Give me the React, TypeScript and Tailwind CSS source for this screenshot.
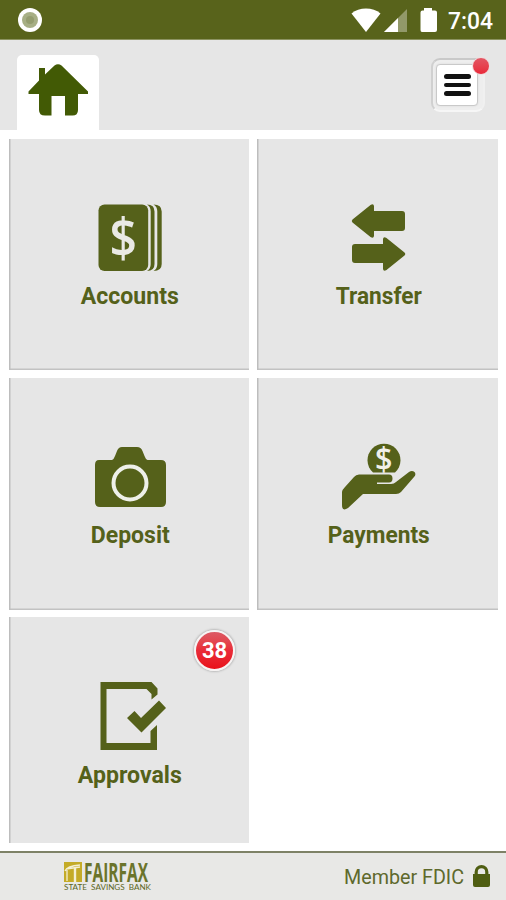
import type { ReactNode } from 'react';

type TileProps = {
  label: string;
  viewBox: string;
  labelWidth: number;
  badge?: string;
  edge?: string;
  children: ReactNode;
};

const fullEdge = 'pt-[60px] shadow-[inset_1.5px_0_0_#bdbdbd,inset_0_-1.5px_0_#c2c2c2]';
const leftEdge = 'pt-[61px] shadow-[inset_1.5px_0_0_#bdbdbd]';

function Tile({ label, viewBox, labelWidth, badge, edge = fullEdge, children }: TileProps) {
  return (
    <button className={`relative flex flex-col items-center bg-[#e6e6e6] ${edge}`}>
      <svg className="h-20 w-[120px] shrink-0" viewBox={viewBox} fill="#55611a">
        {children}
      </svg>
      <svg className="h-8 shrink-0" width={labelWidth} overflow="visible" fill="#55611a">
        <text x="0.8" y="24.6" fontSize="23.2" fontWeight="700" textLength={labelWidth} lengthAdjust="spacingAndGlyphs">
          {label}
        </text>
      </svg>
      {badge && (
        <span className="absolute top-[13px] right-[14px] flex size-[41px] items-center justify-center rounded-full border-[2.5px] border-[#f7f4f4] bg-linear-to-b from-[#dc5964] via-[#e92b38] to-[#e91019] text-[22px] font-bold text-white shadow-[0_0_2px_1px_#b9b9b9]">
          {badge}
        </span>
      )}
    </button>
  );
}

function StatusBar() {
  return (
    <div className="flex h-10 items-center border-b border-[#8c9361] bg-[#58631b] pl-[18px]">
      <span className="flex size-6 items-center justify-center rounded-full bg-white">
        <span className="flex size-4 items-center justify-center rounded-full bg-[#a7af85]">
          <span className="size-2 rounded-full bg-[#949d6f]" />
        </span>
      </span>
      <svg className="ml-auto h-[39px] w-[156px]" viewBox="350 0 156 39" fill="#fff">
        <path d="M351.5 13.5C359 6.8 373 6.8 380.5 13.5L366 32Z" />
        <path d="M384 32 407 9V32Z" opacity=".35" />
        <path d="M384 32 398 18V32Z" />
        <path d="M424 8h8v2.500h3q2 0 2 2V30q0 2-2 2h-13q-1.500 0-1.500-2V12.500q0-2 2-2h1.500Z" />
        <text x="448" y="29" fontSize="23" fontWeight="500" textLength="45" lengthAdjust="spacingAndGlyphs">7:04</text>
      </svg>
    </div>
  );
}

function Header() {
  return (
    <header className="flex h-[90px] items-end justify-between bg-[#e6e6e6] pr-[21px] pl-[17px]">
      <div className="h-[75px] w-[82px] rounded-t-[5px] bg-white">
        <svg className="h-[75px] w-[82px]" viewBox="17 55 82 75" fill="#425a05">
          <path d="M39 68h6v6.500L54.500 65.500q3.500-2.500 7 0L88 91.500v2.500H78v16q0 5.500-5.500 5.500H65V96H51.500v19.500H45q-6 0-6-5.500V94H28.500v-2.500L39 80.500Z" />
        </svg>
      </div>
      <button className="relative mb-[18px] flex size-[54px] items-center justify-center rounded-[9px] border-2 border-t-[#c9c9c9] border-r-[#f0f0f0] border-b-[#f6f6f6] border-l-[#d0d0d0] bg-[#eeeeee] pr-[2px]">
        <span className="flex size-[42px] flex-col items-center justify-center gap-[4px] rounded-[4px] border border-[#c9c9c9] bg-white shadow-[0_0_2px_#d6d6d6]">
          <span className="h-[4.5px] w-[27px] rounded-full bg-[#111]" />
          <span className="h-[4.5px] w-[27px] rounded-full bg-[#111]" />
          <span className="h-[4.5px] w-[27px] rounded-full bg-[#111]" />
        </span>
        <span className="absolute -top-[3px] -right-[7px] size-[18px] rounded-full border border-[#f2dedf] bg-linear-to-b from-[#e35563] to-[#e92739]" />
      </button>
    </header>
  );
}

function Footer() {
  return (
    <footer className="mt-2 flex h-[49px] items-start justify-between border-t-2 border-[#7e8267] bg-[#e8e8e6]">
      <svg className="ml-[60px] h-[47px] w-[100px]" viewBox="60 853 100 47">
        <path fill="#c4ab27" d="M64 862h18v20H64Z" />
        <path fill="none" stroke="#f4efd2" strokeWidth="1.300" d="M65 871q2-5 15-6M66 869l14-2M67 870v11" />
        <path fill="none" stroke="#f4efd2" strokeWidth="2.400" d="M75 868v14" />
        <text x="84" y="881.5" fontSize="26" fontWeight="700" fontFamily="Open Sans, sans-serif" fill="#6b742b" textLength="64" lengthAdjust="spacingAndGlyphs">FAIRFAX</text>
        <text x="64" y="889.7" fontSize="7.8" fontWeight="400" fontFamily="Lato, sans-serif" fill="#5b6622" textLength="87" lengthAdjust="spacingAndGlyphs" wordSpacing="2">STATE SAVINGS BANK</text>
      </svg>
      <svg className="h-[47px] w-[166px]" viewBox="340 853 166 47" fill="#5e692c">
        <text x="344" y="884" fontSize="20.5" textLength="120" lengthAdjust="spacingAndGlyphs">Member FDIC</text>
        <path fill="#4f5e12" d="M473 874h17v11q0 2-2 2h-13q-2 0-2-2Z" />
        <path fill="none" stroke="#4f5e12" strokeWidth="3.200" d="M476.200 875v-3a5.300 5.300 0 0 1 10.600 0v3" />
      </svg>
    </footer>
  );
}

export default function App() {
  return (
    <div className="flex h-[900px] w-[506px] flex-col overflow-hidden bg-white font-['Roboto',sans-serif]">
      <StatusBar />
      <Header />
      <main className="ml-[9px] grid h-[713px] shrink-0 grid-cols-[240px_241px] grid-rows-[231px_232px_226px] gap-x-2 gap-y-[7.5px] pt-[9px]">
        <Tile label="Accounts" viewBox="69 199 120 80" labelWidth={98}>
          <rect x="98.500" y="204.500" width="49.700" height="66.500" rx="6" />
          <path d="M147 204.500q7.500 0 7.500 7v52.500q0 7-7.500 7 3.700-2 3.700-7v-52.500q0-5-3.700-7Z" />
          <path d="M153.500 204.500q8.200 0 8.200 7v52.500q0 7-8.200 7 3.800-2 3.800-7v-52.500q0-5-3.800-7Z" />
          <text x="109.600" y="257" fontSize="54" fontFamily="Open Sans, sans-serif" fontWeight="600" fill="#e9e9e4" textLength="27.500" lengthAdjust="spacingAndGlyphs">$</text>
        </Tile>
        <Tile label="Transfer" viewBox="318 199 120 80" labelWidth={86}>
          <path d="m352.500 219.500 18-14.500q3-2 3.500 1v5h28q3 0 3 3v14q0 3-3 3h-28v5q-.5 3-3.500 1l-18-14.500q-1.500-1.500 0-3Z" />
          <path d="m404.500 252.500-18-14.500q-3-2-3.500 1v5h-28q-3 0-3 3v13q0 3 3 3h28v6q.5 3 3.500 1l18-14.500q1.500-1.500 0-3Z" />
        </Tile>
        <Tile label="Deposit" viewBox="69 438 120 80" labelWidth={79}>
          <path d="M99 460h13q2-1 3-4l2-5q1.500-4 5-4h15q4 0 5.500 4l2 5q1 3 3 4H161q5 0 5 5v37q0 5-5 5H100q-5 0-5-5v-37q0-5 4-5Z" />
          <circle cx="130" cy="483" r="16.500" fill="none" stroke="#eef0e9" strokeWidth="4" />
        </Tile>
        <Tile label="Payments" viewBox="318 438 120 80" labelWidth={102}>
          <path d="M373 472.500A16.500 16.500 0 1 1 395 472.500Z" />
          <text x="375" y="470.500" fontSize="32" fontFamily="Open Sans, sans-serif" fontWeight="600" fill="#f0f0e9" textLength="17.500" lengthAdjust="spacingAndGlyphs">$</text>
          <path d="M359 474.500h30q3.500 0 3.500 4t-3.500 4h-12v1.500h14q3 0 5-2l13-10q3-2 5.500 0 2 2.500-.5 5l-13 15q-2 2-5 2H363l-15 14q-6 4-6-3v-13q0-2 3-5l9-10q2-2.500 5-2.500Z" />
        </Tile>
        <Tile label="Approvals" viewBox="69.500 678 120 80" labelWidth={104} badge="38" edge={leftEdge}>
          <path d="M101 682h51l6 6.500v6l-6 5v-5.500l-5-5h-40v54h44v-12l6.500-6v25H101Z" />
          <path d="m127.500 718 7.500-7 6.500 7 18-17.500 7 7.500-24.500 24.500Z" />
        </Tile>
      </main>
      <Footer />
    </div>
  );
}
